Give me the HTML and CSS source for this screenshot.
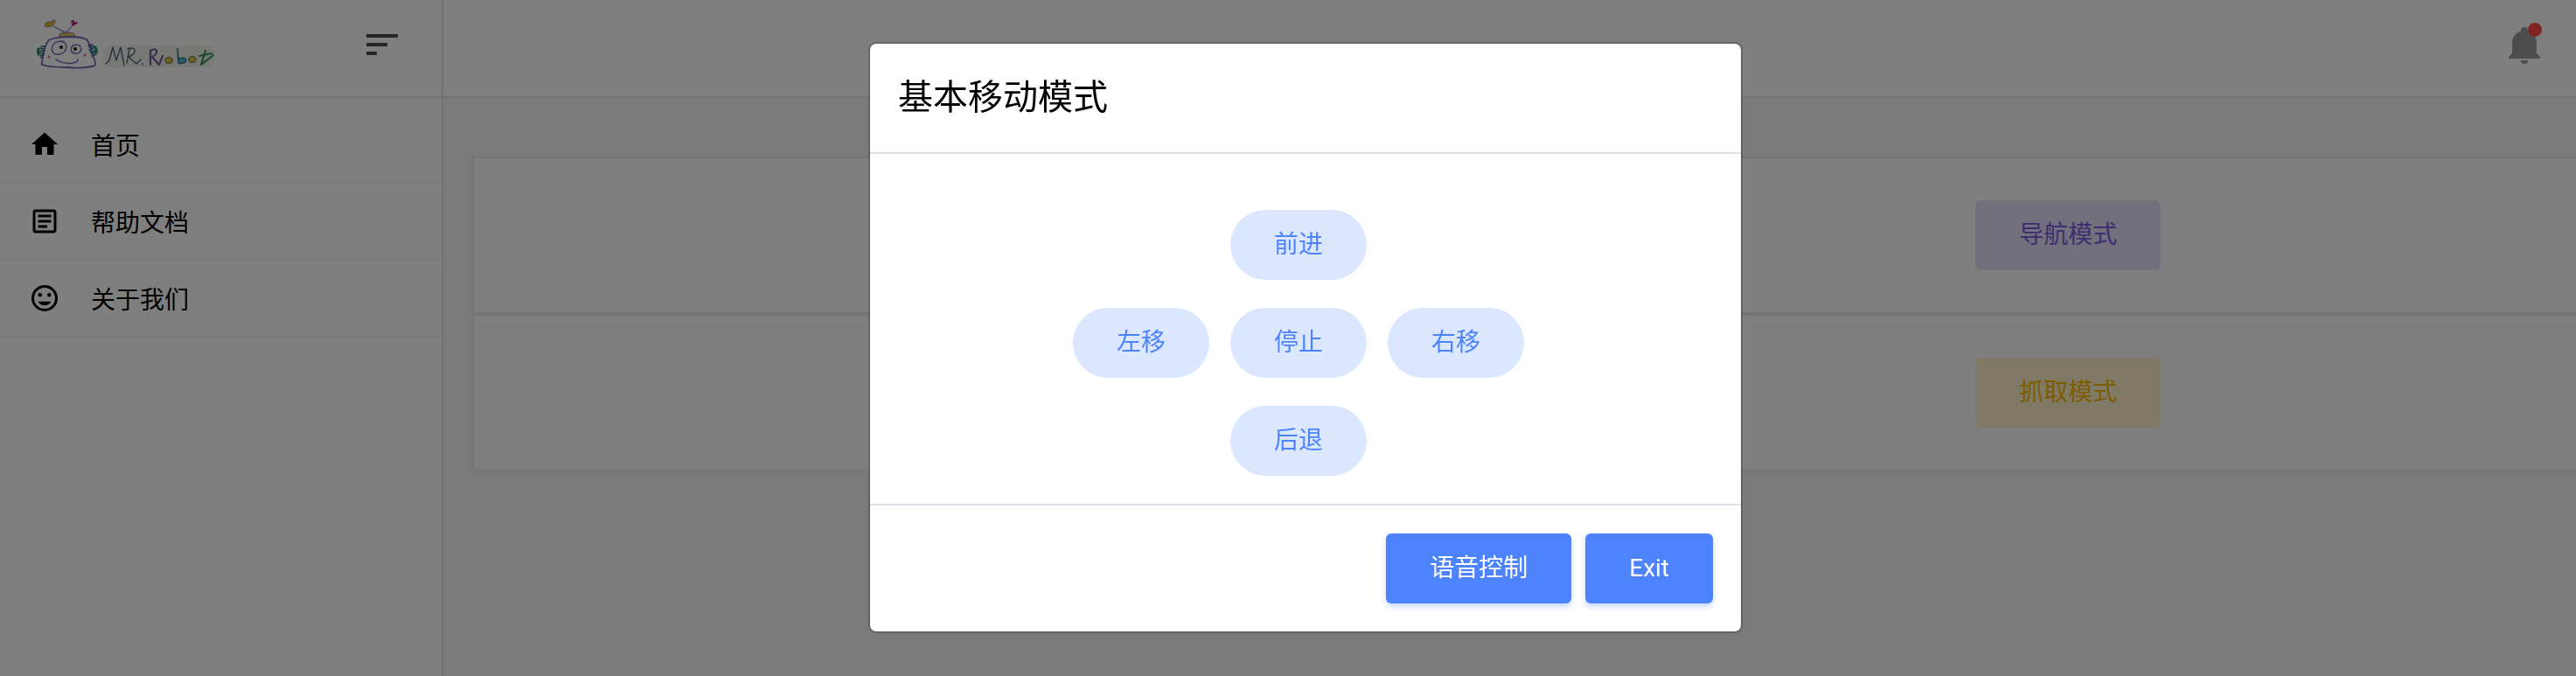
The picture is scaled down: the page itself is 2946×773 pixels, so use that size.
FILE: index.html
```html
<!DOCTYPE html>
<html lang="zh-CN">
<head>
<meta charset="utf-8">
<title>Mr. Robot</title>
<link rel="stylesheet" href="styles.css">
</head>
<body>
<div class="app">
  <aside class="sidebar">
    <div class="brand">
      <svg class="logo" viewBox="0 0 220 72" role="img" aria-label="Mr. Robot">
        <g fill="none" stroke-linecap="round" stroke-linejoin="round">
          <path d="M21 15 C27 19 33 21 40 24 M43 14 C40 18 38 20 34 23" stroke="#8c78c8" stroke-width="1.2"/>
          <path d="M12 12 C14 9 17 10 18 11 C19 7 24 7 23 10 C22 14 18 16 13 16 C11 16 11 14 12 12Z" fill="#dcb428" stroke="#9880a0" stroke-width="1"/>
          <path d="M42 9 L44 8 L45 11 L48 10 L48 12 L43 14Z" fill="#c02c98" stroke="#c02c98" stroke-width="1"/>
          <path d="M28 24 Q30 22 37 22 Q44 22 45 24 L46 27 L28 27Z" fill="#dcc050" stroke="#907ca8" stroke-width="1"/>
          <path d="M8 57 C9 47 12 34 16 31 C22 27 30 28 38 27 C46 27 56 27 60 31 C63 36 65 46 68 53 C70 58 69 61 65 61 C55 63 46 63 38 62 C28 62 18 62 12 60 C7 59 7 58 8 58" stroke="#7068b8" stroke-width="1.8"/>
          <path d="M34 34 C30 31 22 32 20 38 C18 45 22 48 28 47 C35 46 37 40 35 35 Q34 33 31 32" stroke="#7068b8" stroke-width="1.4"/>
          <path d="M43 37 C40 41 41 46 46 46 C52 47 54 42 52 38 C49 35 44 36 42 39" stroke="#7068b8" stroke-width="1.4"/>
          <path d="M24 53 C29 57 38 58 44 57 Q49 56 49 53" stroke="#7068b8" stroke-width="1.5"/>
          <path d="M7 38 L12 38 M6 40 L11 41 M6 43 L11 43 M5 45 L10 46 M6 48 L10 48 M6 50 L9 51 M61 37 L66 36 M62 39 L68 38 M62 42 L67 40 M63 44 L69 43 M64 46 L70 45 M65 49 L70 47" stroke="#305c88" stroke-width="1.4"/>
          <path d="M4 41 Q3 44 4 47 M69 39 Q71 42 70 45" stroke="#208c5c" stroke-width="3"/>
        </g>
        <g fill="#181818"><circle cx="30" cy="39" r="2"/><circle cx="46" cy="41" r="2"/></g>
        <g fill="#dc6cac"><circle cx="16" cy="50" r="1.500"/><circle cx="57" cy="48" r="1.500"/></g>
        <rect x="78" y="37" width="128" height="25" rx="10" fill="#f0f0ea"/>
        <g fill="none" stroke-linecap="round" stroke-linejoin="round" stroke-width="1.400">
          <path d="M81 58 L85 54 L89 39 L93 54 L98 39 L102 60 M108 41 L105 57 M106 41 C116 37 117 46 107 50 L116 58 L121 53 M123 59 L123 58" stroke="#486880"/>
          <path d="M132 59 L132 43 C140 38 142 46 134 50 L142 59 L146 49" stroke="#74609c" stroke-width="2.200"/>
          <ellipse cx="153" cy="54" rx="4" ry="3.500" stroke="#788850" fill="#dcc850"/>
          <path d="M163 41 L164 57 C175 59 176 49 165 52" stroke="#30849c" fill="#60c0d4" stroke-width="1.800"/>
          <ellipse cx="180" cy="53" rx="4" ry="3.500" stroke="#788850" fill="#dcc850"/>
          <path d="M195 43 L190 59 L204 48 M188 49 L202 46" stroke="#308c54" stroke-width="2"/>
        </g>
      </svg>
      <button class="toggle" type="button" aria-label="菜单">
        <svg viewBox="0 0 36 24"><path d="M0 0H36V4H0ZM0 10H24V14H0ZM0 20H12V24H0Z"/></svg>
      </button>
    </div>
    <nav class="menu">
      <a class="menu-item" href="#home">
        <svg viewBox="0 0 24 24"><path d="M10,20V14H14V20H19V12H22L12,3L2,12H5V20H10Z"/></svg>
        <span>首页</span>
      </a>
      <a class="menu-item" href="#docs">
        <svg viewBox="0 0 24 24"><path d="M5,3C3.890,3 3,3.890 3,5V19C3,20.110 3.890,21 5,21H19C20.110,21 21,20.110 21,19V5C21,3.890 20.110,3 19,3H5M5,5H19V19H5V5M7,7V9H17V7H7M7,11V13H17V11H7M7,15V17H14V15H7Z"/></svg>
        <span>帮助文档</span>
      </a>
      <a class="menu-item" href="#about">
        <svg viewBox="0 0 24 24"><path d="M12,2A10,10 0 1,0 22,12A10,10 0 0,0 12,2M12,20A8,8 0 1,1 20,12A8,8 0 0,1 12,20M8.500,8A1.500,1.500 0 1,0 10,9.500A1.500,1.500 0 0,0 8.500,8M15.500,8A1.500,1.500 0 1,0 17,9.500A1.500,1.500 0 0,0 15.500,8M7,14.500C7.700,16.300 9.700,17.500 12,17.500C14.300,17.500 16.300,16.300 17,14.500Z"/></svg>
        <span>关于我们</span>
      </a>
    </nav>
  </aside>
  <div class="page">
    <header class="topbar">
      <button class="bell" type="button" aria-label="通知">
        <svg viewBox="0 0 24 24"><path d="M21,19V20H3V19L5,17V11C5,7.900 7.030,5.170 10,4.290C10,4.190 10,4.100 10,4A2,2 0 0,1 12,2A2,2 0 0,1 14,4C14,4.100 14,4.190 14,4.290C16.970,5.170 19,7.900 19,11V17L21,19M14,21A2,2 0 0,1 12,23A2,2 0 0,1 10,21"/></svg>
        <span class="dot"></span>
      </button>
    </header>
    <main class="modes">
      <section class="mode-row"><button class="btn btn-purple" type="button">导航模式</button></section>
      <section class="mode-row"><button class="btn btn-yellow" type="button">抓取模式</button></section>
    </main>
  </div>
</div>
<div class="backdrop">
  <div class="modal" role="dialog" aria-modal="true" aria-labelledby="modal-title">
    <header class="modal-header"><h1 id="modal-title">基本移动模式</h1></header>
    <div class="modal-body">
      <div class="pad">
        <button class="btn btn-pill" type="button">前进</button>
      </div>
      <div class="pad">
        <button class="btn btn-pill" type="button">左移</button>
        <button class="btn btn-pill" type="button">停止</button>
        <button class="btn btn-pill" type="button">右移</button>
      </div>
      <div class="pad">
        <button class="btn btn-pill" type="button">后退</button>
      </div>
    </div>
    <footer class="modal-footer">
      <button class="btn btn-primary" type="button">语音控制</button>
      <button class="btn btn-primary" type="button">Exit</button>
    </footer>
  </div>
</div>
</body>
</html>
```
FILE: styles.css
```css
* { box-sizing: border-box; }

body {
  margin: 0;
  background: #f4f4f4;
  color: #000;
  font-family: Roboto, "Noto Sans CJK SC", sans-serif;
  font-size: 28px;
  font-weight: 400;
  overflow: hidden;
}

button {
  font: inherit;
  cursor: pointer;
}

.app {
  display: flex;
  min-height: 100vh;
}

.sidebar {
  flex: 0 0 507px;
  background: #fff;
  border-right: 2px solid #e4e4e4;
}

.brand {
  display: flex;
  align-items: center;
  justify-content: space-between;
  height: 112px;
  padding: 0 50px 8px 40px;
  border-bottom: 2px solid #e4e4e4;
}

.logo {
  width: 220px;
  height: 72px;
}

.toggle,
.bell {
  display: block;
  padding: 0;
  border: 0;
  background: none;
}

.toggle svg {
  display: block;
  width: 36px;
  height: 24px;
  fill: #4c4c4c;
}

.menu { padding-top: 10px; }

.menu-item {
  display: flex;
  align-items: center;
  gap: 35px;
  height: 88px;
  padding: 0 33px;
  border-bottom: 2px solid #f2f2f2;
  color: #000;
  text-decoration: none;
}

.menu-item svg {
  width: 36px;
  height: 36px;
}

.page {
  flex: 1;
  min-width: 0;
}

.topbar {
  display: flex;
  align-items: center;
  justify-content: flex-end;
  height: 112px;
  padding: 0 35px 8px;
  background: #fff;
  border-bottom: 2px solid #e4e4e4;
}

.bell { position: relative; }

.bell svg {
  display: block;
  width: 48px;
  height: 48px;
  fill: #9a9a9a;
}

.dot {
  position: absolute;
  top: -1px;
  right: 4px;
  width: 16px;
  height: 16px;
  border-radius: 50%;
  background: #ff4747;
}

.modes {
  margin-right: -29px;
  padding: 67px 0 0 33px;
}

.mode-row {
  display: grid;
  grid-template-columns: 1fr 1fr;
  padding: 48px 0;
  background: #fff;
  border: 2px solid #e6e9ec;
}

.mode-row .btn {
  grid-column: 2;
  justify-self: center;
}

.btn {
  height: 80px;
  padding: 0 48px;
  border: 2px solid transparent;
  border-radius: 6px;
  line-height: 40px;
  white-space: nowrap;
}

.btn-purple {
  background: #e4e1fa;
  color: #7c5ce0;
}

.btn-yellow {
  background: #fff3cd;
  color: #fdb900;
}

.btn-pill {
  border-radius: 40px;
  background: #dbe6ff;
  color: #4d83ff;
}

.btn-primary {
  background: #4d83ff;
  color: #fff;
  box-shadow: 0 4px 6px rgba(77, 131, 255, 0.3);
}

.backdrop {
  position: fixed;
  inset: 0;
  display: flex;
  align-items: flex-start;
  justify-content: center;
  padding: 48px 0 0 40px;
  background: rgba(0, 0, 0, 0.5);
}

.modal {
  width: 1000px;
  background: #fff;
  background-clip: padding-box;
  border: 2px solid rgba(0, 0, 0, 0.2);
  border-radius: 9px;
}

.modal-header {
  padding: 32px;
  border-bottom: 2px solid #dee2e6;
}

.modal-header h1 {
  margin: 0;
  font-size: 40px;
  font-weight: 400;
  line-height: 60px;
}

.modal-body {
  display: grid;
  gap: 32px;
  padding: 64px 16px 32px 0;
}

.pad {
  display: flex;
  justify-content: center;
  gap: 24px;
}

.modal-footer {
  display: flex;
  justify-content: flex-end;
  gap: 16px;
  padding: 32px;
  border-top: 2px solid #dee2e6;
}
```
